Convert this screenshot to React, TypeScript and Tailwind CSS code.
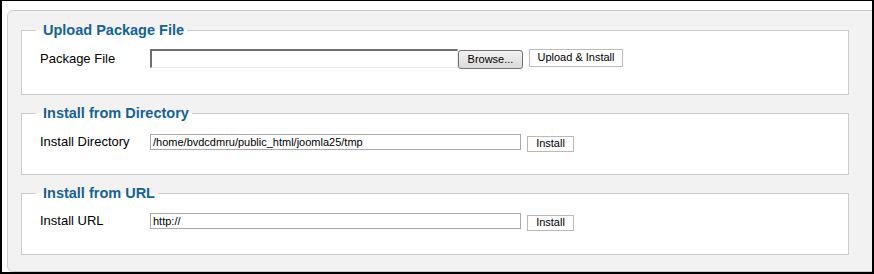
import React from 'react';

const font = { fontFamily: '"Liberation Sans", Arial, sans-serif' };

const Legend: React.FC<{ children: React.ReactNode }> = ({ children }) => (
    <legend className="-ml-[4px] pl-[7px] pr-[3px] text-[14.5px] leading-4 font-bold text-[#146295]">
        {children}
    </legend>
);

const SmallButton: React.FC<{ label: string; width: string }> = ({ label, width }) => (
    <button
        type="button"
        className={`${width} h-[16px] border border-[#b9b9b9] bg-white text-[11px] leading-none text-black`}
    >
        {label}
    </button>
);

const App: React.FC = () => {
    return (
        <div
            className="w-[874px] h-[274px] bg-white border-t border-x-2 border-b-2 border-black overflow-hidden flex flex-col"
            style={font}
        >
            {/* Gray content panel */}
            <div className="mt-[9px] ml-[5px] w-[880px] flex-1 bg-[#f2f2f2] border border-[#cccccc] rounded-l-[6px] pl-[13px] pt-[11px]">
                {/* Upload Package File */}
                <fieldset className="w-[828px] border border-[#cccccc] bg-white pl-[18px] pb-[26px]">
                    <Legend>Upload Package File</Legend>
                    <div className="mt-[11px] h-[19px] flex items-center">
                        <span className="w-[110px] text-[13px] text-black">Package File</span>
                        <div className="w-[308px] h-[19px] border-t-2 border-l-2 border-[#6e6e6e] border-r border-b border-r-[#e6e6e6] border-b-[#e6e6e6] bg-white"></div>
                        <button
                            type="button"
                            className="w-[65px] h-[19px] mt-[2px] rounded-[3px] border border-[#707070] bg-gradient-to-b from-[#f3f3f3] to-[#dadada] text-[11px] leading-none text-black"
                        >
                            Browse...
                        </button>
                        <button
                            type="button"
                            className="w-[94px] h-[18px] ml-[6px] -mt-[2px] border border-[#bcbcbc] bg-white text-[11px] leading-none text-black"
                        >
                            Upload &amp; Install
                        </button>
                    </div>
                </fieldset>

                {/* Install from Directory */}
                <fieldset className="mt-[10px] w-[828px] border border-[#cccccc] bg-white pl-[18px] pb-[24px]">
                    <Legend>Install from Directory</Legend>
                    <div className="mt-[13px] h-[16px] flex items-center">
                        <span className="w-[110px] text-[13px] text-black">Install Directory</span>
                        <div className="w-[371px] h-[16px] border border-[#a9a9a9] bg-white pl-[2px] text-[11px] leading-[14px] text-black">
                            /home/bvdcdmru/public_html/joomla25/tmp
                        </div>
                        <div className="ml-[6px]">
                            <SmallButton label="Install" width="w-[47px]" />
                        </div>
                    </div>
                </fieldset>

                {/* Install from URL */}
                <fieldset className="mt-[10px] w-[828px] border border-[#cccccc] bg-white pl-[18px] pb-[25px]">
                    <Legend>Install from URL</Legend>
                    <div className="mt-[12px] h-[16px] flex items-center">
                        <span className="w-[110px] text-[13px] text-black">Install URL</span>
                        <div className="w-[371px] h-[16px] border border-[#a9a9a9] bg-white pl-[2px] text-[11px] leading-[14px] text-black">
                            http://
                        </div>
                        <div className="ml-[6px]">
                            <SmallButton label="Install" width="w-[47px]" />
                        </div>
                    </div>
                </fieldset>
            </div>
        </div>
    );
};

export default App;
